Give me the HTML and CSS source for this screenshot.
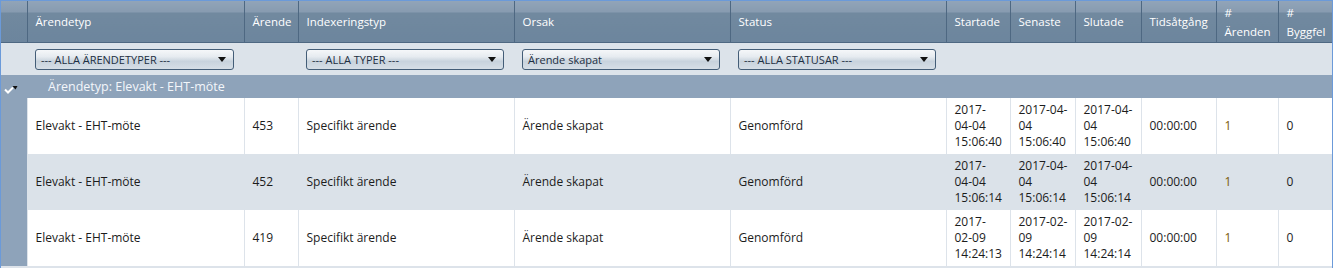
FILE: index.html
```html
<!DOCTYPE html>
<html lang="sv">
<head>
    <meta charset="UTF-8">
    <title>Ärenden</title>
    <link rel="stylesheet" href="styles.css">
</head>
<body>
    <div class="grid">
        <table class="grid-table">
            <colgroup>
                <col class="c-gutter">
                <col class="c-wide-a">
                <col class="c-num">
                <col class="c-wide">
                <col class="c-wide">
                <col class="c-wide">
                <col class="c-date-a">
                <col class="c-date-b">
                <col class="c-date-c">
                <col class="c-time">
                <col class="c-count">
                <col class="c-last">
            </colgroup>
            <thead>
                <tr class="head-row">
                    <th></th>
                    <th>Ärendetyp</th>
                    <th>Ärende</th>
                    <th>Indexeringstyp</th>
                    <th>Orsak</th>
                    <th>Status</th>
                    <th>Startade</th>
                    <th>Senaste</th>
                    <th>Slutade</th>
                    <th>Tidsåtgång</th>
                    <th>#<br>Ärenden</th>
                    <th>#<br>Byggfel</th>
                </tr>
                <tr class="filter-row">
                    <td></td>
                    <td><div class="dropdown"><span>--- ALLA ÄRENDETYPER ---</span><svg width="8" height="5" viewBox="0 0 8 5"><polygon points="0,0 8,0 4,5" fill="#111"/></svg></div></td>
                    <td></td>
                    <td><div class="dropdown"><span>--- ALLA TYPER ---</span><svg width="8" height="5" viewBox="0 0 8 5"><polygon points="0,0 8,0 4,5" fill="#111"/></svg></div></td>
                    <td><div class="dropdown"><span>Ärende skapat</span><svg width="8" height="5" viewBox="0 0 8 5"><polygon points="0,0 8,0 4,5" fill="#111"/></svg></div></td>
                    <td><div class="dropdown"><span>--- ALLA STATUSAR ---</span><svg width="8" height="5" viewBox="0 0 8 5"><polygon points="0,0 8,0 4,5" fill="#111"/></svg></div></td>
                    <td></td><td></td><td></td><td></td><td></td><td></td>
                </tr>
            </thead>
            <tbody>
                <tr class="group-row">
                    <td class="gutter"><svg class="collapse-icon" width="14" height="9" viewBox="0 0 14 9"><polyline points="1,4.5 4,7.5 9,2.5" fill="none" stroke="#fff" stroke-width="2"/><polygon points="8.5,1 13.5,1 11.5,4.5" fill="#111"/></svg></td>
                    <td colspan="11" class="group-title">Ärendetyp: Elevakt - EHT-möte</td>
                </tr>
                <tr class="data-row">
                    <td class="gutter"></td>
                    <td>Elevakt - EHT-möte</td>
                    <td>453</td>
                    <td>Specifikt ärende</td>
                    <td>Ärende skapat</td>
                    <td>Genomförd</td>
                    <td class="date">2017-<br>04-04<br>15:06:40</td>
                    <td class="date">2017-04-<br>04<br>15:06:40</td>
                    <td class="date">2017-04-<br>04<br>15:06:40</td>
                    <td>00:00:00</td>
                    <td class="count">1</td>
                    <td>0</td>
                </tr>
                <tr class="data-row alt">
                    <td class="gutter"></td>
                    <td>Elevakt - EHT-möte</td>
                    <td>452</td>
                    <td>Specifikt ärende</td>
                    <td>Ärende skapat</td>
                    <td>Genomförd</td>
                    <td class="date">2017-<br>04-04<br>15:06:14</td>
                    <td class="date">2017-04-<br>04<br>15:06:14</td>
                    <td class="date">2017-04-<br>04<br>15:06:14</td>
                    <td>00:00:00</td>
                    <td class="count">1</td>
                    <td>0</td>
                </tr>
                <tr class="data-row">
                    <td class="gutter"></td>
                    <td>Elevakt - EHT-möte</td>
                    <td>419</td>
                    <td>Specifikt ärende</td>
                    <td>Ärende skapat</td>
                    <td>Genomförd</td>
                    <td class="date">2017-<br>02-09<br>14:24:13</td>
                    <td class="date">2017-02-<br>09<br>14:24:14</td>
                    <td class="date">2017-02-<br>09<br>14:24:14</td>
                    <td>00:00:00</td>
                    <td class="count">1</td>
                    <td>0</td>
                </tr>
            </tbody>
        </table>
    </div>
</body>
</html>
```

FILE: styles.css
```css
body {
    margin: 0;
    padding: 0;
    font-family: "Open Sans", "Noto Sans", sans-serif;
    font-size: 12px;
    background-color: #fff;
}

.grid {
    width: 1331px;
    height: 267px;
    border-top: 1px solid #6b9ad9;
    border-left: 1px solid #6b9ad9;
    border-right: 1px solid #6b9ad9;
    background-color: #dde3ea;
    overflow: hidden;
}

.grid-table {
    width: 1331px;
    table-layout: fixed;
    border-collapse: collapse;
    border-spacing: 0;
}

.c-gutter { width: 26px; }
.c-wide-a { width: 217px; }
.c-num { width: 54px; }
.c-wide { width: 216px; }
.c-date-a { width: 64px; }
.c-date-b { width: 65px; }
.c-date-c { width: 66px; }
.c-time { width: 75px; }
.c-count { width: 62px; }
.c-last { width: 54px; }

th, td {
    padding: 0 8px;
    text-align: left;
    vertical-align: middle;
    overflow: hidden;
}

/* header */
.head-row th {
    height: 41px;
    color: #fff;
    font-size: 11.5px;
    font-weight: normal;
    line-height: 19px;
    white-space: nowrap;
    border-left: 1px solid #4e6882;
    border-bottom: 1px solid #4e6882;
    background: linear-gradient(#91a4b8 0, #879bb0 11px, #71899f 12px, #6c859d 100%);
}

.head-row th:first-child {
    border-left: none;
}

/* filter row */
.filter-row td {
    height: 32px;
    background-color: #dce3ea;
    padding: 0 10px 0 8px;
}

.dropdown {
    display: flex;
    align-items: center;
    justify-content: space-between;
    height: 19px;
    padding: 0 7px 0 5px;
    border: 1px solid #435d77;
    border-radius: 3px;
    font-size: 11px;
    color: #1d2f42;
    white-space: nowrap;
    background: linear-gradient(#f5f7f9 0%, #e6ebf0 35%, #c8d3dd 60%, #d6dee6 100%);
}

/* group row */
.group-row td {
    height: 22px;
    line-height: 16px;
    background-color: #8ea3ba;
    padding: 1px 0 0 0;
}

.group-row .gutter {
    vertical-align: top;
    padding: 0;
    height: 23px;
}

.group-row .group-title {
    color: #f3f6fa;
    font-size: 12.5px;
    padding-left: 21px;
}

.collapse-icon {
    display: block;
    margin: 10px 0 0 3px;
}

/* data rows */
.data-row td {
    height: 56px;
    color: #1c1c1c;
    line-height: 16px;
    background-color: #fff;
    border-left: 1px solid #dde3ea;
}

.data-row .date {
    white-space: nowrap;
}

.data-row.alt td {
    background-color: #dbe2e9;
    border-left-color: #dbe2e9;
}

.data-row td.gutter,
.data-row.alt td.gutter {
    background-color: #8ea3ba;
    border-left: none;
}

.data-row .count {
    color: #7a5a0a;
}
```
